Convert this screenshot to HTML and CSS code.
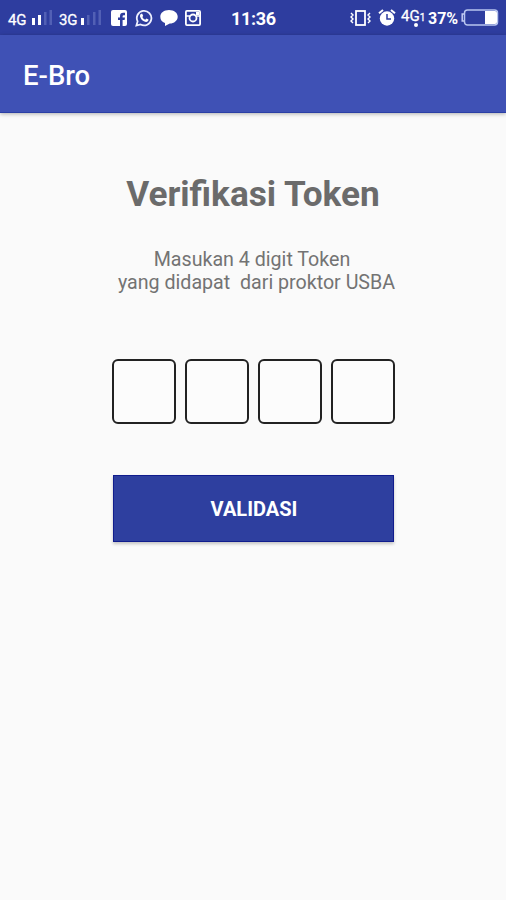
FILE: index.html
```html
<!DOCTYPE html>
<html lang="id">
<head>
<meta charset="utf-8">
<title>E-Bro</title>
<link rel="stylesheet" href="styles.css">
</head>
<body>
<div class="status">
  <div class="group left">
    <span class="net">4G</span>
    <svg class="bars" width="21" height="16" viewBox="0 0 21 16"><path fill="#fff" d="M0 8h3v7H0zM6 5h3v10H6z"/><path fill="#5260b5" d="M12 2h2.500v13H12zM17.500 0H20v15h-2.500z"/></svg>
    <span class="net second">3G</span>
    <svg class="bars" width="21" height="16" viewBox="0 0 21 16"><path fill="#fff" d="M0 8h3v7H0z"/><path fill="#5260b5" d="M6 5h2.500v10H6zM12 2h2.500v13H12zM17.500 0H20v15h-2.500z"/></svg>
    <svg class="facebook" width="16" height="16" viewBox="0 0 16 16"><rect width="16" height="16" rx="2" fill="#fff"/><path fill="#2d3d9e" d="M9 16V10H7V7.500h2V6q0-3.200 3.200-3.200H14v2.500h-1.200q-1.200 0-1.200 1.200v1H14l-.4 2.500h-2V16z"/></svg>
    <svg class="whatsapp" width="18" height="18" viewBox="0 0 18 18"><path fill="none" stroke="#eef0ff" stroke-width="1.800" d="M1.400 16.600l1.200-4.200A7.300 7.300 0 1 1 5.600 15.500z"/><path fill="#fff" d="M6.200 4.700l1 .1 1 2.100-.9 1.200q1 1.900 2.900 2.700l1.200-1.200 2.100 1-.1 1q-.7 1.500-2.500 1.300-4.400-.8-5.900-5.400-.3-2 1.200-2.800z"/></svg>
    <svg class="chat" width="18" height="16" viewBox="0 0 18 16"><path fill="#fff" d="M9 0c5 0 8.700 2.800 8.700 6.700S14 13.500 9.800 13.500L5 16v-3.100C2 12 .3 9.800.3 6.700.3 2.800 4 0 9 0z"/></svg>
    <svg class="insta" width="16" height="16" viewBox="0 0 16 16"><rect x=".9" y=".9" width="14.200" height="14.200" rx="1" fill="none" stroke="#fff" stroke-width="1.800"/><path stroke="#fff" stroke-width="1.500" d="M1 6h4M11 6h4"/><circle cx="8" cy="8" r="3.500" fill="none" stroke="#fff" stroke-width="1.800"/><path fill="#fff" d="M11 2h3v3h-3z"/></svg>
  </div>
  <span class="time">11:36</span>
  <div class="group right">
    <svg class="vibrate" width="21" height="16" viewBox="0 0 21 16"><g fill="none" stroke="#fff"><rect x="6" y="1" width="9" height="14" stroke-width="1.800"/><path stroke-width="1.400" d="M1 3l2 2-2 2 2 2-2 2 2 2M20 3l-2 2 2 2-2 2 2 2-2 2"/></g></svg>
    <svg class="alarm" width="18" height="17" viewBox="0 0 18 17"><circle cx="9" cy="9.500" r="7.200" fill="#fff"/><path fill="none" stroke="#fff" stroke-width="2" d="M1 4.300L5 1M17 4.300L13 1"/><path fill="none" stroke="#2d3d9e" stroke-width="1.500" d="M9 5v5h4"/></svg>
    <span class="data"><span>4G</span><small>1</small><i></i></span>
    <span class="percent">37%</span>
    <svg class="battery" width="38" height="17" viewBox="0 0 38 17"><path d="M3 5H1.200v7H3" fill="none" stroke="#c5cdf5" stroke-width="1.500"/><rect x="3.500" y="1" width="33" height="15" rx="3" fill="none" stroke="#b8c5ef" stroke-width="1.500"/><path fill="#fff" d="M24 2h10q2 0 2 2v9q0 2-2 2H24z"/></svg>
  </div>
</div>
<header class="bar">E-Bro</header>
<main class="content">
  <h1 class="title">Verifikasi Token</h1>
  <p class="hint"><span class="line first">Masukan 4 digit Token</span><span class="line">yang didapat&nbsp; dari proktor USBA</span></p>
  <div class="pins"><div class="pin"></div><div class="pin"></div><div class="pin"></div><div class="pin"></div></div>
  <button class="submit" type="button">VALIDASI</button>
</main>
</body>
</html>
```
FILE: styles.css
```css
* { box-sizing: border-box; }
body {
  margin: 0;
  min-height: 900px;
  background: #fafafa;
  font-family: Roboto, "Liberation Sans", sans-serif;
}
svg { display: block; flex: none; }
.status {
  display: grid;
  grid-template-columns: 231px 119px 156px;
  height: 35px;
  background: #2e3d9f;
  color: #fff;
  white-space: nowrap;
}
.group { display: flex; align-items: center; height: 35px; }
.left { padding-left: 8px; }
.net { width: 24px; font-size: 15px; line-height: 16px; padding-top: 4px; letter-spacing: -.2px; -webkit-text-stroke: .3px #fff; }
.second { margin-left: 6px; width: 22px; }
.facebook { margin-left: 9px; }
.whatsapp { margin-left: 8px; }
.chat { margin-left: 7px; }
.insta { margin-left: 7px; }
.time { font-size: 18px; font-weight: 700; line-height: 37px; letter-spacing: -.3px; }
.alarm { margin-left: 7px; }
.data {
  position: relative;
  display: flex;
  align-items: baseline;
  width: 27px;
  margin-left: 5px;
  padding-bottom: 2px;
  font-size: 15px;
  line-height: 18px;
  -webkit-text-stroke: .3px #fff;
}
.data small { font-size: 10px; }
.data i { position: absolute; left: 13px; top: 16px; width: 4px; height: 4px; border-radius: 2px; background: #fff; }
.percent { width: 33px; font-size: 16px; font-weight: 700; line-height: 20px; padding-top: 2px; }
.bar {
  height: 78px;
  padding-left: 23px;
  background: #3f51b5;
  border-bottom: 1px solid #2b3fa5;
  box-shadow: 0 1px 4px rgba(0, 0, 0, .3);
  color: #fff;
  font-size: 27.5px;
  font-weight: 500;
  line-height: 82px;
}
.content { display: flex; flex-direction: column; align-items: center; }
.title { margin: 60px 0 0; font-size: 35.2px; line-height: 42px; font-weight: 700; color: #6b6b6b; }
.hint { margin: 33px 0 0; font-size: 19.65px; line-height: 23px; color: #737373; text-align: center; padding-left: 7px; }
.line { display: block; white-space: nowrap; }
.first { padding-right: 9px; }
.pins { display: flex; gap: 8.8px; margin-top: 65px; padding-left: 1px; }
.pin { width: 64.4px; height: 64.5px; border: 2px solid #222; border-radius: 6px; background: #fcfcfc; }
.submit {
  width: 281px;
  height: 67px;
  margin: 51.5px 0 0 1px;
  padding: 2px 0 0 1px;
  border: 1px solid #101c8d;
  background: #2e3f9f;
  box-shadow: 0 2px 3px rgba(0, 0, 0, .22);
  color: #fff;
  font: 700 20px/63px Roboto, sans-serif;
}
```
